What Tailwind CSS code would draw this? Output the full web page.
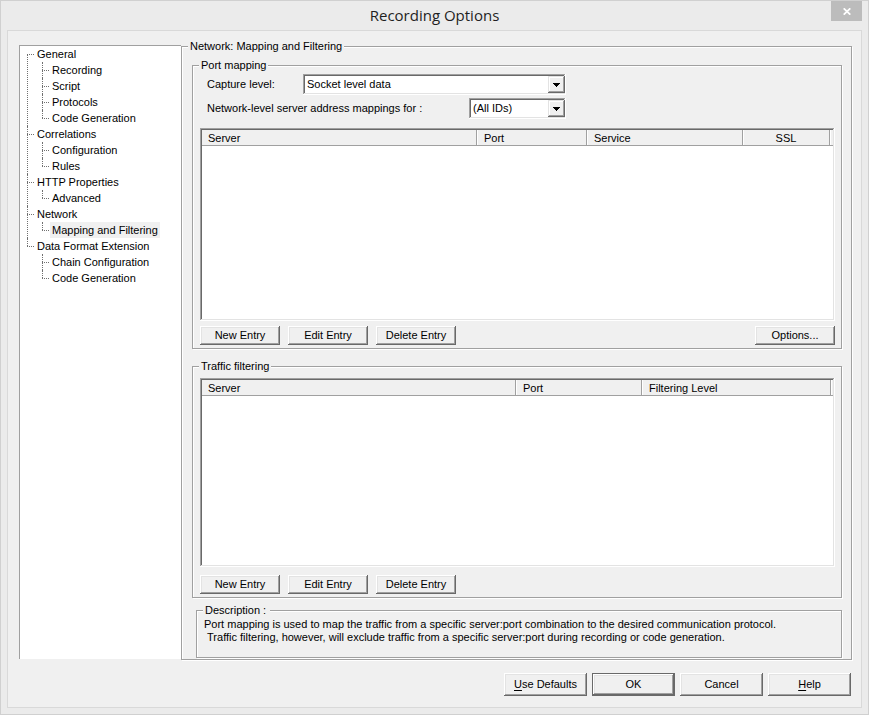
<!DOCTYPE html>
<html lang="en">
<head>
<meta charset="utf-8">
<meta name="viewport" content="width=device-width, initial-scale=1">
<title>Recording Options</title>
<script src="https://cdn.jsdelivr.net/npm/@tailwindcss/browser@4"></script>
</head>
<body class="flex min-h-screen flex-col border border-[#d0d0d0] bg-[#ebebeb] px-1.5 pb-1.5 font-['Liberation_Sans',Arial,sans-serif] text-[11px] leading-[13px] text-black">

<header class="relative flex h-[29px] items-center justify-center pb-0.5">
  <h1 class="font-['Open_Sans','Segoe_UI',sans-serif] text-[15px] leading-5 text-[#1f1f1f]">Recording Options</h1>
  <button type="button" aria-label="Close" class="absolute top-0 right-0 flex h-5 w-[31px] items-center justify-center bg-[#bcbcbc]">
    <svg class="h-[7px] w-2" viewBox="0 0 8 7" fill="none" stroke="#fff" stroke-width="1.7"><path d="M0.7 0.3 7.3 6.7M7.3 0.3 0.7 6.7"/></svg>
  </button>
</header>

<main class="flex flex-1 flex-col border border-[#d9d9d9] bg-[#f0f0f0] pt-[9px] pr-[9px] pb-[11px] pl-[11px]">
  <div class="flex flex-1">

    <nav aria-label="Option pages" class="mt-[5px] mb-px w-[162px] shrink-0 border-t border-l border-[#a0a0a0] bg-white pl-[7px] leading-4 whitespace-nowrap">
      <ul>
        <li class="relative pl-[10px] before:absolute before:top-2 before:bottom-0 before:left-0 before:border-l before:border-dotted before:border-[#707070] after:absolute after:top-2 after:left-0 after:w-[7px] after:border-t after:border-dotted after:border-[#707070]"><a href="#general" class="block">General</a>
          <ul class="pl-[5px]">
            <li class="relative pl-[10px] before:absolute before:inset-y-0 before:left-0 before:border-l before:border-dotted before:border-[#707070] after:absolute after:top-2 after:left-0 after:w-[7px] after:border-t after:border-dotted after:border-[#707070]"><a href="#recording">Recording</a></li>
            <li class="relative pl-[10px] before:absolute before:inset-y-0 before:left-0 before:border-l before:border-dotted before:border-[#707070] after:absolute after:top-2 after:left-0 after:w-[7px] after:border-t after:border-dotted after:border-[#707070]"><a href="#script">Script</a></li>
            <li class="relative pl-[10px] before:absolute before:inset-y-0 before:left-0 before:border-l before:border-dotted before:border-[#707070] after:absolute after:top-2 after:left-0 after:w-[7px] after:border-t after:border-dotted after:border-[#707070]"><a href="#protocols">Protocols</a></li>
            <li class="relative pl-[10px] before:absolute before:top-0 before:left-0 before:h-2 before:border-l before:border-dotted before:border-[#707070] after:absolute after:top-2 after:left-0 after:w-[7px] after:border-t after:border-dotted after:border-[#707070]"><a href="#code">Code Generation</a></li>
          </ul>
        </li>
        <li class="relative pl-[10px] before:absolute before:inset-y-0 before:left-0 before:border-l before:border-dotted before:border-[#707070] after:absolute after:top-2 after:left-0 after:w-[7px] after:border-t after:border-dotted after:border-[#707070]"><a href="#correlations" class="block">Correlations</a>
          <ul class="pl-[5px]">
            <li class="relative pl-[10px] before:absolute before:inset-y-0 before:left-0 before:border-l before:border-dotted before:border-[#707070] after:absolute after:top-2 after:left-0 after:w-[7px] after:border-t after:border-dotted after:border-[#707070]"><a href="#configuration">Configuration</a></li>
            <li class="relative pl-[10px] before:absolute before:top-0 before:left-0 before:h-2 before:border-l before:border-dotted before:border-[#707070] after:absolute after:top-2 after:left-0 after:w-[7px] after:border-t after:border-dotted after:border-[#707070]"><a href="#rules">Rules</a></li>
          </ul>
        </li>
        <li class="relative pl-[10px] before:absolute before:inset-y-0 before:left-0 before:border-l before:border-dotted before:border-[#707070] after:absolute after:top-2 after:left-0 after:w-[7px] after:border-t after:border-dotted after:border-[#707070]"><a href="#http" class="block">HTTP Properties</a>
          <ul class="pl-[5px]">
            <li class="relative pl-[10px] before:absolute before:top-0 before:left-0 before:h-2 before:border-l before:border-dotted before:border-[#707070] after:absolute after:top-2 after:left-0 after:w-[7px] after:border-t after:border-dotted after:border-[#707070]"><a href="#advanced">Advanced</a></li>
          </ul>
        </li>
        <li class="relative pl-[10px] before:absolute before:inset-y-0 before:left-0 before:border-l before:border-dotted before:border-[#707070] after:absolute after:top-2 after:left-0 after:w-[7px] after:border-t after:border-dotted after:border-[#707070]"><a href="#network" class="block">Network</a>
          <ul class="pl-[5px]">
            <li class="relative pl-2 before:absolute before:top-0 before:left-0 before:h-2 before:border-l before:border-dotted before:border-[#707070] after:absolute after:top-2 after:left-0 after:w-[7px] after:border-t after:border-dotted after:border-[#707070]"><a href="#mapping" aria-current="page" class="inline-block bg-[#f0f0f0] px-0.5 align-top">Mapping and Filtering</a></li>
          </ul>
        </li>
        <li class="relative pl-[10px] before:absolute before:top-0 before:left-0 before:h-2 before:border-l before:border-dotted before:border-[#707070] after:absolute after:top-2 after:left-0 after:w-[7px] after:border-t after:border-dotted after:border-[#707070]"><a href="#dfe" class="block">Data Format Extension</a>
          <ul class="pl-[5px]">
            <li class="relative pl-[10px] before:absolute before:inset-y-0 before:left-0 before:border-l before:border-dotted before:border-[#707070] after:absolute after:top-2 after:left-0 after:w-[7px] after:border-t after:border-dotted after:border-[#707070]"><a href="#chain">Chain Configuration</a></li>
            <li class="relative pl-[10px] before:absolute before:top-0 before:left-0 before:h-2 before:border-l before:border-dotted before:border-[#707070] after:absolute after:top-2 after:left-0 after:w-[7px] after:border-t after:border-dotted after:border-[#707070]"><a href="#dfe-code">Code Generation</a></li>
          </ul>
        </li>
      </ul>
    </nav>

    <fieldset class="flex min-w-0 flex-1 flex-col border border-[#a0a0a0] shadow-[1px_1px_0_#fff,inset_1px_1px_0_#fff]">
      <legend class="ml-1.5 bg-[#f0f0f0] px-0.5">Network: Mapping and Filtering</legend>
      <div class="flex flex-1 flex-col pt-1.5 pr-[9px] pb-px pl-[10px]">

        <fieldset class="flex min-w-0 flex-auto flex-col border border-[#a0a0a0] shadow-[1px_1px_0_#fff,inset_1px_1px_0_#fff]">
          <legend class="ml-1.5 bg-[#f0f0f0] px-0.5">Port mapping</legend>
          <div class="flex flex-auto flex-col pt-0.5 pr-1.5 pb-[3px] pl-[7px]">
            <div class="flex w-[366px] flex-col gap-[3px] pl-[7px]">
              <div class="flex items-center justify-between">
                <label for="capture">Capture level:</label>
                <div class="relative w-[263px]">
                  <select id="capture" class="block h-[21px] w-full appearance-none bg-white pl-1 shadow-[inset_-1px_-1px_0_#fff,inset_1px_1px_0_#a0a0a0,inset_-2px_-2px_0_#e3e3e3,inset_2px_2px_0_#696969]"><option>Socket level data</option></select>
                  <span class="pointer-events-none absolute top-0.5 right-px flex size-[17px] items-center justify-center bg-[#f0f0f0] shadow-[inset_-1px_-1px_0_#696969,inset_1px_1px_0_#e3e3e3,inset_-2px_-2px_0_#a0a0a0,inset_2px_2px_0_#fff]"><svg class="h-1 w-[7px]" viewBox="0 0 7 4" shape-rendering="crispEdges"><path d="M0 0H7V1H6V2H5V3H4V4H3V3H2V2H1V1H0Z"/></svg></span>
                </div>
              </div>
              <div class="flex items-center justify-between">
                <label for="ids">Network-level server address mappings for :</label>
                <div class="relative w-[97px]">
                  <select id="ids" class="block h-[21px] w-full appearance-none bg-white pl-1 shadow-[inset_-1px_-1px_0_#fff,inset_1px_1px_0_#a0a0a0,inset_-2px_-2px_0_#e3e3e3,inset_2px_2px_0_#696969]"><option>(All IDs)</option></select>
                  <span class="pointer-events-none absolute top-0.5 right-px flex size-[17px] items-center justify-center bg-[#f0f0f0] shadow-[inset_-1px_-1px_0_#696969,inset_1px_1px_0_#e3e3e3,inset_-2px_-2px_0_#a0a0a0,inset_2px_2px_0_#fff]"><svg class="h-1 w-[7px]" viewBox="0 0 7 4" shape-rendering="crispEdges"><path d="M0 0H7V1H6V2H5V3H4V4H3V3H2V2H1V1H0Z"/></svg></span>
                </div>
              </div>
            </div>
            <div class="mt-[9px] min-h-[193px] flex-auto bg-white p-0.5 shadow-[inset_-1px_-1px_0_#fff,inset_1px_1px_0_#a0a0a0,inset_-2px_-2px_0_#e3e3e3,inset_2px_2px_0_#696969]">
              <table class="w-full table-fixed border-separate border-spacing-0 bg-[#f0f0f0] text-left">
                <thead>
                  <tr>
                    <th scope="col" class="h-4 border-r border-b border-[#a0a0a0] pt-0.5 pl-1.5 font-normal">Server</th>
                    <th scope="col" class="w-[110px] border-r border-b border-[#a0a0a0] pt-0.5 pl-[7px] font-normal shadow-[inset_1px_0_0_#fff]">Port</th>
                    <th scope="col" class="w-[156px] border-r border-b border-[#a0a0a0] pt-0.5 pl-[7px] font-normal shadow-[inset_1px_0_0_#fff]">Service</th>
                    <th scope="col" class="w-[87px] border-r border-b border-[#a0a0a0] pt-0.5 text-center font-normal shadow-[inset_1px_0_0_#fff]">SSL</th>
                    <td class="w-[3px] border-b border-[#a0a0a0] shadow-[inset_1px_0_0_#fff]"></td>
                  </tr>
                </thead>
              </table>
            </div>
            <div class="mt-[5px] flex gap-2">
              <button type="button" class="h-[19px] w-20 bg-[#f0f0f0] shadow-[inset_-1px_-1px_0_#696969,inset_1px_1px_0_#fff,inset_-2px_-2px_0_#a0a0a0,inset_2px_2px_0_#e3e3e3]">New Entry</button>
              <button type="button" class="h-[19px] w-20 bg-[#f0f0f0] shadow-[inset_-1px_-1px_0_#696969,inset_1px_1px_0_#fff,inset_-2px_-2px_0_#a0a0a0,inset_2px_2px_0_#e3e3e3]">Edit Entry</button>
              <button type="button" class="h-[19px] w-20 bg-[#f0f0f0] shadow-[inset_-1px_-1px_0_#696969,inset_1px_1px_0_#fff,inset_-2px_-2px_0_#a0a0a0,inset_2px_2px_0_#e3e3e3]">Delete Entry</button>
              <button type="button" class="ml-auto h-[19px] w-20 bg-[#f0f0f0] shadow-[inset_-1px_-1px_0_#696969,inset_1px_1px_0_#fff,inset_-2px_-2px_0_#a0a0a0,inset_2px_2px_0_#e3e3e3]">Options...</button>
            </div>
          </div>
        </fieldset>

        <fieldset class="mt-[11px] flex min-w-0 flex-auto flex-col border border-[#a0a0a0] shadow-[1px_1px_0_#fff,inset_1px_1px_0_#fff]">
          <legend class="ml-1.5 bg-[#f0f0f0] px-0.5">Traffic filtering</legend>
          <div class="flex flex-auto flex-col pt-[5px] pr-1.5 pb-[3px] pl-[7px]">
            <div class="min-h-[189px] flex-auto bg-white p-0.5 shadow-[inset_-1px_-1px_0_#fff,inset_1px_1px_0_#a0a0a0,inset_-2px_-2px_0_#e3e3e3,inset_2px_2px_0_#696969]">
              <table class="w-full table-fixed border-separate border-spacing-0 bg-[#f0f0f0] text-left">
                <thead>
                  <tr>
                    <th scope="col" class="h-4 border-r border-b border-[#a0a0a0] pt-0.5 pl-1.5 font-normal">Server</th>
                    <th scope="col" class="w-[126px] border-r border-b border-[#a0a0a0] pt-0.5 pl-[7px] font-normal shadow-[inset_1px_0_0_#fff]">Port</th>
                    <th scope="col" class="w-[189px] border-r border-b border-[#a0a0a0] pt-0.5 pl-[7px] font-normal shadow-[inset_1px_0_0_#fff]">Filtering Level</th>
                    <td class="w-0.5 border-b border-[#a0a0a0] shadow-[inset_1px_0_0_#fff]"></td>
                  </tr>
                </thead>
              </table>
            </div>
            <div class="mt-2 flex gap-2">
              <button type="button" class="h-[19px] w-20 bg-[#f0f0f0] shadow-[inset_-1px_-1px_0_#696969,inset_1px_1px_0_#fff,inset_-2px_-2px_0_#a0a0a0,inset_2px_2px_0_#e3e3e3]">New Entry</button>
              <button type="button" class="h-[19px] w-20 bg-[#f0f0f0] shadow-[inset_-1px_-1px_0_#696969,inset_1px_1px_0_#fff,inset_-2px_-2px_0_#a0a0a0,inset_2px_2px_0_#e3e3e3]">Edit Entry</button>
              <button type="button" class="h-[19px] w-20 bg-[#f0f0f0] shadow-[inset_-1px_-1px_0_#696969,inset_1px_1px_0_#fff,inset_-2px_-2px_0_#a0a0a0,inset_2px_2px_0_#e3e3e3]">Delete Entry</button>
            </div>
          </div>
        </fieldset>

        <fieldset class="mt-1.5 ml-1 min-w-0 border border-[#a0a0a0] shadow-[1px_1px_0_#fff,inset_1px_1px_0_#fff]">
          <legend class="ml-1.5 bg-[#f0f0f0] pr-1 pl-0.5">Description :</legend>
          <p class="px-[7px] pt-px pb-[13px]">Port mapping is used to map the traffic from a specific server:port combination to the desired communication protocol.<br>&nbsp;Traffic filtering, however, will exclude traffic from a specific server:port during recording or code generation.</p>
        </fieldset>
      </div>
    </fieldset>
  </div>

  <footer class="mt-[13px] flex justify-end gap-[5px] pr-px">
    <button type="button" class="h-[23px] w-[83px] bg-[#f0f0f0] shadow-[inset_-1px_-1px_0_#696969,inset_1px_1px_0_#fff,inset_-2px_-2px_0_#a0a0a0,inset_2px_2px_0_#e3e3e3]"><span class="underline underline-offset-2">U</span>se Defaults</button>
    <button type="button" class="h-[23px] w-[83px] border border-[#696969] bg-[#f0f0f0] shadow-[inset_-1px_-1px_0_#696969,inset_1px_1px_0_#fff,inset_-2px_-2px_0_#a0a0a0,inset_2px_2px_0_#e3e3e3]">OK</button>
    <button type="button" class="h-[23px] w-[83px] bg-[#f0f0f0] shadow-[inset_-1px_-1px_0_#696969,inset_1px_1px_0_#fff,inset_-2px_-2px_0_#a0a0a0,inset_2px_2px_0_#e3e3e3]">Cancel</button>
    <button type="button" class="h-[23px] w-[83px] bg-[#f0f0f0] shadow-[inset_-1px_-1px_0_#696969,inset_1px_1px_0_#fff,inset_-2px_-2px_0_#a0a0a0,inset_2px_2px_0_#e3e3e3]"><span class="underline underline-offset-2">H</span>elp</button>
  </footer>
</main>
</body>
</html>
